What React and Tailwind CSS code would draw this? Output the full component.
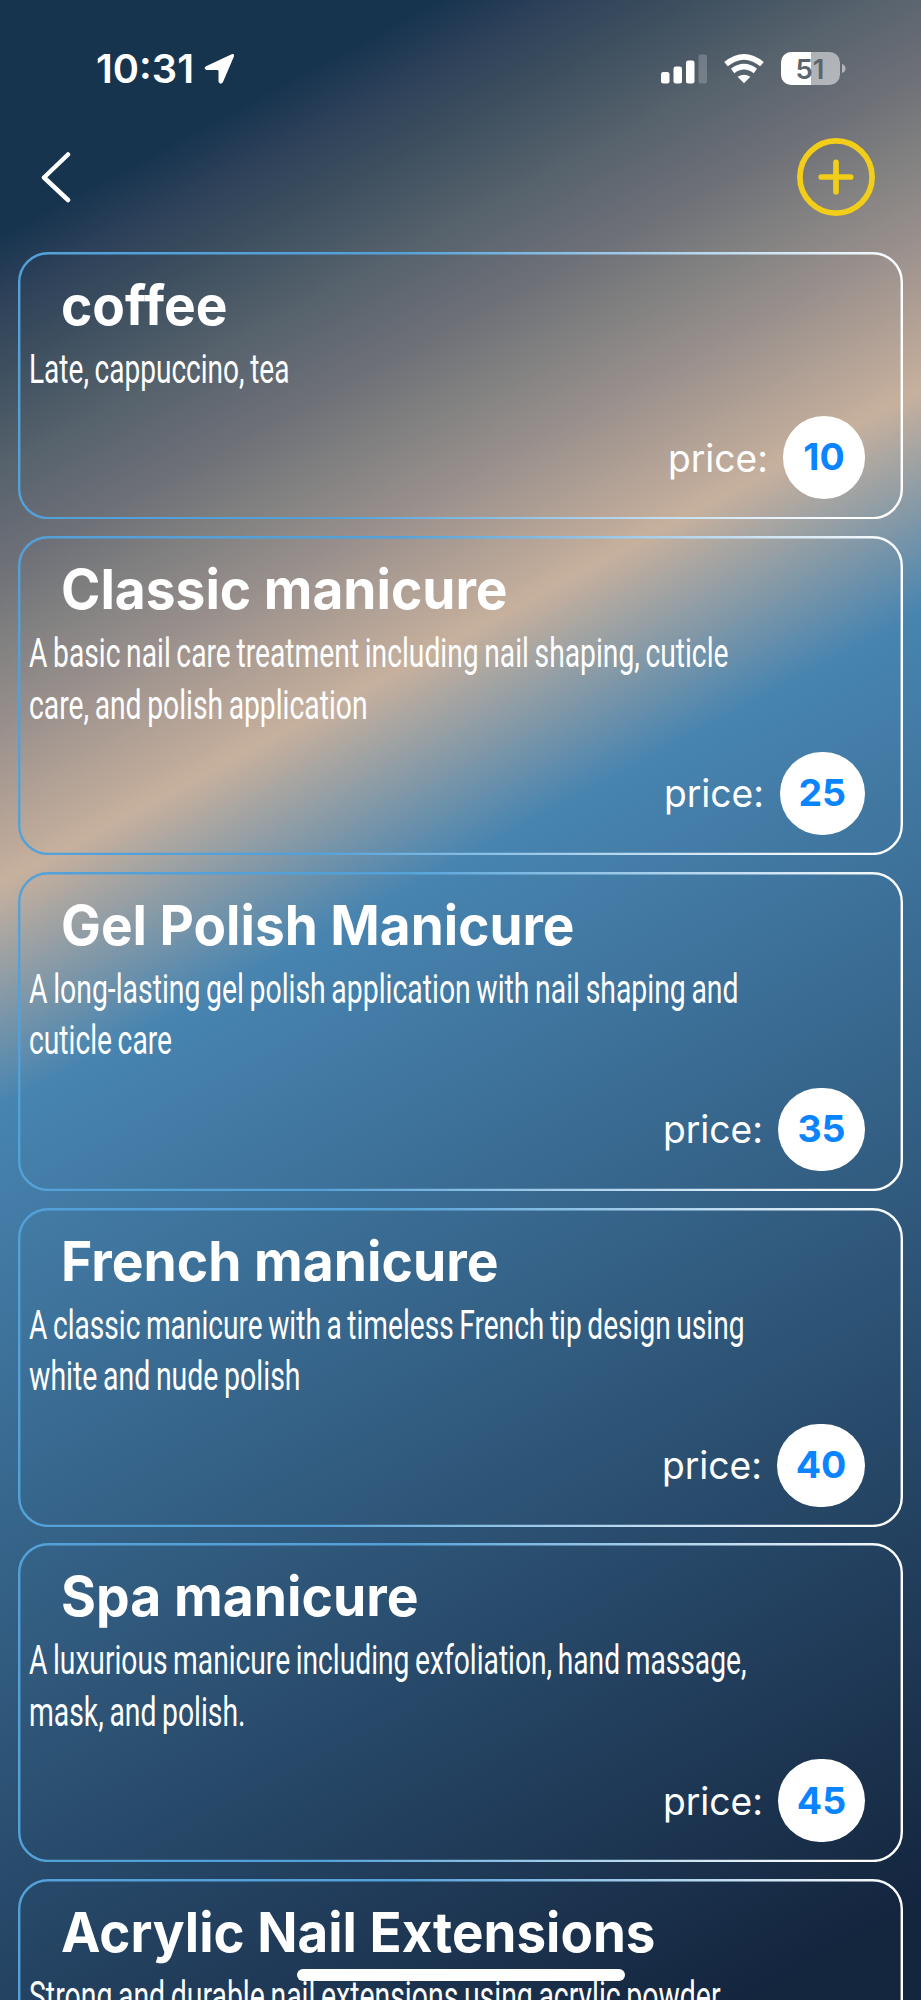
const items = [
  { name: "coffee", titleWidth: 166.5, lines: [["Late, cappuccino, tea", 260.5]], price: 10, w: "w-[82px]", h: "h-[267.3px]", height: 267.3 },
  { name: "Classic manicure", titleWidth: 446.5, lines: [["A basic nail care treatment including nail shaping, cuticle", 699.5], ["care, and polish application", 338.5]], price: 25, w: "w-[85.5px]", h: "h-[319.1px]", height: 319.1 },
  { name: "Gel Polish Manicure", titleWidth: 513.5, lines: [["A long-lasting gel polish application with nail shaping and", 709.5], ["cuticle care", 143]], price: 35, w: "w-[87px]", h: "h-[319.1px]", height: 319.1 },
  { name: "French manicure", titleWidth: 437.5, lines: [["A classic manicure with a timeless French tip design using", 715.5], ["white and nude polish", 271.5]], price: 40, w: "w-[88px]", h: "h-[319.1px]", height: 319.1 },
  { name: "Spa manicure", titleWidth: 357.5, lines: [["A luxurious manicure including exfoliation, hand massage,", 717.5], ["mask, and polish.", 216.5]], price: 45, w: "w-[87px]", h: "h-[319.1px]", height: 319.1 },
  { name: "Acrylic Nail Extensions", titleWidth: 594.5, lines: [["Strong and durable nail extensions using acrylic powder", 691.5]], price: null, w: "w-[87px]", h: "h-[319.1px]", height: 319.1 },
];

function Frame({ id, height }) {
  return (
    <svg className="absolute inset-0 h-full w-full" viewBox={`0 0 885 ${height}`} fill="none">
      <defs>
        <linearGradient id={id} gradientUnits="userSpaceOnUse" x1="380" y1="0" x2="865" y2="120">
          <stop offset="0" stopColor="#53a1d8" />
          <stop offset="1" stopColor="#ffffff" />
        </linearGradient>
      </defs>
      <rect x="1.2" y="1.2" width="882.6" height={height - 2.4} rx="29" stroke={`url(#${id})`} strokeWidth="2.4" />
    </svg>
  );
}

// Text stretched or condensed to an exact width
function FittedText({ width, size, weight, height, baseline, family, wordSpacing = "0", children }) {
  return (
    <svg className="block overflow-visible" width={width + 4} height={height}>
      <text x="0" y={baseline} textLength={width} lengthAdjust="spacingAndGlyphs" fill="white" fontSize={size} fontWeight={weight} fontFamily={family} wordSpacing={wordSpacing}>{children}</text>
    </svg>
  );
}

function Card({ item, index }) {
  return (
    <article className={`relative shrink-0 ${item.h}`}>
      <Frame id={`frame${index}`} height={item.height} />
      <div className="pl-[43px] pt-[27px]">
        <FittedText width={item.titleWidth} size="55" weight="700" height={62} baseline={46.4} family="Inter, sans-serif">{item.name}</FittedText>
      </div>
      <div className="pl-[10.5px] pt-[5px]">
        {item.lines.map(([text, width]) => (
          <div key={text} className="h-[51.7px]">
            <FittedText width={width} size="40" weight="400" height={51} baseline={36.5} family="Roboto, sans-serif" wordSpacing="-2">{text}</FittedText>
          </div>
        ))}
      </div>
      {item.price !== null && (
        <div className="absolute bottom-[20px] right-[38px] flex items-center gap-[11.5px]">
          <FittedText width={100} size="38.5" weight="400" height={54} baseline={40.6} family="Inter, sans-serif">price:</FittedText>
          <span className={`flex h-[83px] items-center justify-center rounded-[41.5px] bg-white font-[Inter] text-[37.5px] font-bold text-[#0a84ff] ${item.w}`}>{item.price}</span>
        </div>
      )}
    </article>
  );
}

export default function App() {
  return (
    <main className="relative flex h-[2000px] w-[921px] flex-col overflow-hidden bg-[linear-gradient(151.8deg,#17344f_208px,#2c4059_260px,#3b4d5e_318px,#56626c_412px,#6e7078_500px,#808080_564px,#988f8c_640px,#c7b09d_779px,#4784b0_976px,#14253e_2115px)] font-[Inter,sans-serif]">
      <header className="flex h-[251.8px] shrink-0 flex-col px-[41px] pt-[45.5px]">
        <div className="flex h-[46px] items-center">
          <span className="ml-[54.5px]"><FittedText width={98} size="39.5" weight="600" height={46} baseline={37} family="Inter, sans-serif">10:31</FittedText></span>
          <svg className="ml-[6px]" width="31" height="32" viewBox="0 0 31 32"><path d="M2 13.2 27.7 1.2Q30.5.2 30 3.2L18.9 29.3Q16.5 32.5 14.5 28.8V18Q14.3 17 13 16.9H2.4Q-1 15.4 2 13.2Z" fill="white" /></svg>
          <div className="ml-auto flex items-center">
            <svg width="46" height="30" viewBox="0 0 46 30" fill="white"><rect y="18" width="8.5" height="11.5" rx="2.3" /><rect x="12.5" y="12.5" width="8.5" height="17" rx="2.3" /><rect x="25" y="6.5" width="8.5" height="23" rx="2.3" /><rect x="37.5" y=".5" width="8.5" height="29" rx="2.3" opacity=".2" /></svg>
            <svg className="ml-[16px]" width="42" height="30" viewBox="0 0 42 30"><path d="M3 10.2Q21-4.4 39 10.2M9.6 17Q21 8.2 32.4 17" fill="none" stroke="white" strokeWidth="5.6" /><path d="M14.6 22.8Q21 18.6 27.4 22.8L21 29.3Z" fill="white" /></svg>
            <svg className="ml-[16px] mr-[34.5px]" width="65" height="33" viewBox="0 0 65 33"><defs><clipPath id="battery"><rect width="59" height="33" rx="10.5" /></clipPath></defs><g clipPath="url(#battery)"><rect width="59" height="33" fill="white" opacity=".5" /><rect width="30" height="33" fill="white" /></g><path d="M61 12Q64.5 13 64.5 16.5T61 21Z" fill="white" opacity=".5" /><text x="14.5" y="26.5" textLength="29" lengthAdjust="spacingAndGlyphs" fontFamily="Inter" fontWeight="600" fontSize="27.5" fill="#5b646d">51</text></svg>
          </div>
        </div>
        <div className="mt-[46.3px] flex items-center justify-between">
          <svg width="30" height="52" viewBox="0 0 30 52"><path d="M27 3.5 3 26.5 27 49" fill="none" stroke="white" strokeWidth="4.5" strokeLinecap="round" strokeLinejoin="round" /></svg>
          <svg className="mr-[5px]" width="78" height="78" viewBox="0 0 78 78" fill="none" stroke="#f2ce18" strokeWidth="5.7" strokeLinecap="round"><circle cx="39" cy="39" r="36.1" /><path d="M24.3 39H53.7M39 24.3V53.7" /></svg>
        </div>
      </header>
      <section className="flex flex-col gap-[16.75px] px-[18px]">
        {items.map((item, index) => <Card key={item.name} item={item} index={index} />)}
      </section>
      <div className="absolute bottom-[19px] left-[297px] h-[12px] w-[328px] rounded-full bg-white" />
    </main>
  );
}
